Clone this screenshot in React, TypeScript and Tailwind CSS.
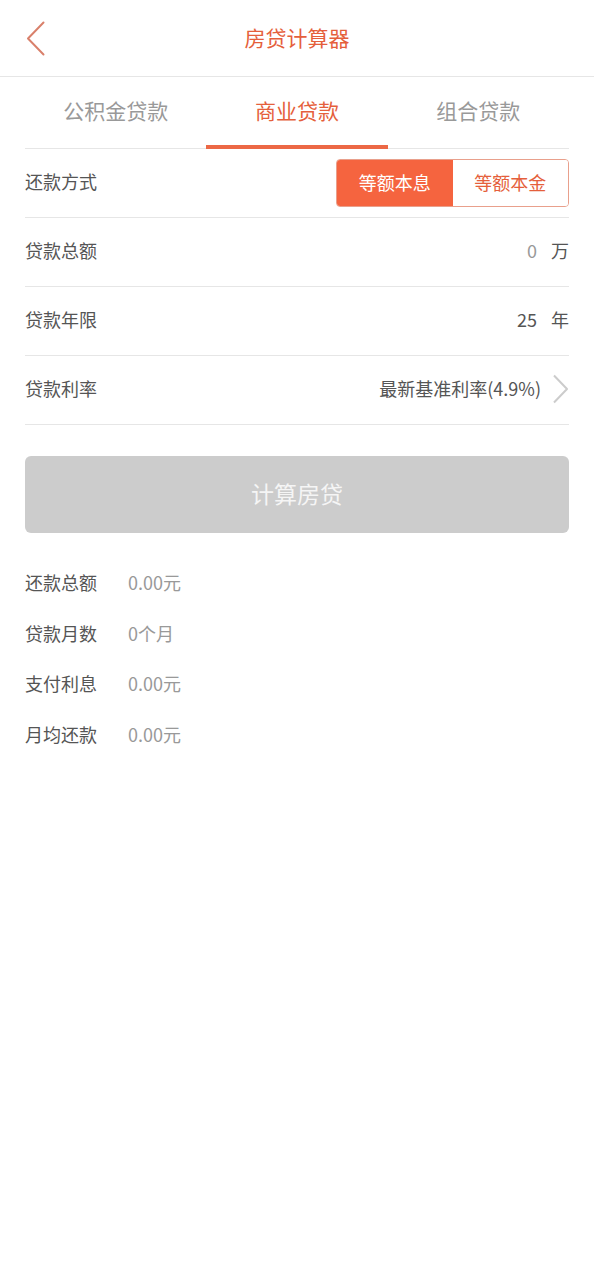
import React from "react";

const font = { fontFamily: '"Noto Sans CJK SC", "Noto Sans", sans-serif' };

function Row({ label, children }: { label: string; children: React.ReactNode }) {
  return (
    <div className="flex h-[69px] items-center justify-between border-b border-[#e6e6e6] pb-[3px]">
      <span className="text-[18px] text-[#555555]">{label}</span>
      {children}
    </div>
  );
}

export default function App() {
  const results = [
    ["还款总额", "0.00元"],
    ["贷款月数", "0个月"],
    ["支付利息", "0.00元"],
    ["月均还款", "0.00元"],
  ];
  return (
    <div className="min-h-[1280px] w-[594px] bg-white" style={font}>
      <header className="relative flex h-[77px] items-center justify-center border-b border-[#e6e6e6] pb-[2px]">
        <svg className="absolute left-[24px] top-[20px]" width="24" height="38" viewBox="0 0 24 38" fill="none">
          <path d="M19.5 2.5 L4 18.5 L19.5 34.5" stroke="#d9806b" strokeWidth="2" strokeLinecap="round" strokeLinejoin="round" />
        </svg>
        <h1 className="text-[21px] leading-none text-[#e55f3c]">房贷计算器</h1>
      </header>
      <div className="px-[25px]">
        <div className="flex h-[72px] border-b border-[#e6e6e6]">
          {["公积金贷款", "商业贷款", "组合贷款"].map((t, i) => (
            <div key={t} className="relative flex flex-1 items-center justify-center pb-[4px]">
              <span className={`text-[21px] leading-none ${i === 1 ? "text-[#e55f3c]" : "text-[#999999]"}`}>{t}</span>
              {i === 1 && <div className="absolute bottom-[-1px] left-0 right-0 h-[4px] bg-[#ec6845]" />}
            </div>
          ))}
        </div>
        <div className="flex h-[69px] items-center justify-between border-b border-[#e6e6e6]">
          <span className="pb-[3px] text-[18px] text-[#555555]">还款方式</span>
          <div className="flex h-[48px] w-[233px] overflow-hidden rounded-[4px] border border-[#e9a08c]">
            <div className="flex flex-1 items-center justify-center bg-[#f5643f] pb-[2px] text-[18px] text-white">等额本息</div>
            <div className="flex flex-1 items-center justify-center bg-white pb-[2px] text-[18px] text-[#e55f3c]">等额本金</div>
          </div>
        </div>
        <Row label="贷款总额">
          <div className="flex items-center gap-[14px] text-[18px]">
            <span className="text-[#999999]">0</span>
            <span className="text-[#555555]">万</span>
          </div>
        </Row>
        <Row label="贷款年限">
          <div className="flex items-center gap-[14px] text-[18px]">
            <span className="text-[#555555]">25</span>
            <span className="text-[#555555]">年</span>
          </div>
        </Row>
        <Row label="贷款利率">
          <div className="flex items-center gap-[11px]">
            <span className="text-[18px] text-[#555555]">最新基准利率(4.9%)</span>
            <svg width="17" height="30" viewBox="0 0 17 30" fill="none">
              <path d="M2 1.5 L15 15 L2 28.5" stroke="#cccccc" strokeWidth="2" strokeLinejoin="round" />
            </svg>
          </div>
        </Row>
        <button className="mt-[31px] flex h-[77px] w-full items-center justify-center rounded-[6px] bg-[#cccccc] pb-[3px] text-[23px] text-[#f5f5f5]">
          计算房贷
        </button>
        <div className="mt-[24px]">
          {results.map(([k, v]) => (
            <div key={k} className="flex h-[50.7px] items-center text-[18px]">
              <span className="w-[103px] text-[#555555]">{k}</span>
              <span className="text-[#999999]">{v}</span>
            </div>
          ))}
        </div>
      </div>
    </div>
  );
}
